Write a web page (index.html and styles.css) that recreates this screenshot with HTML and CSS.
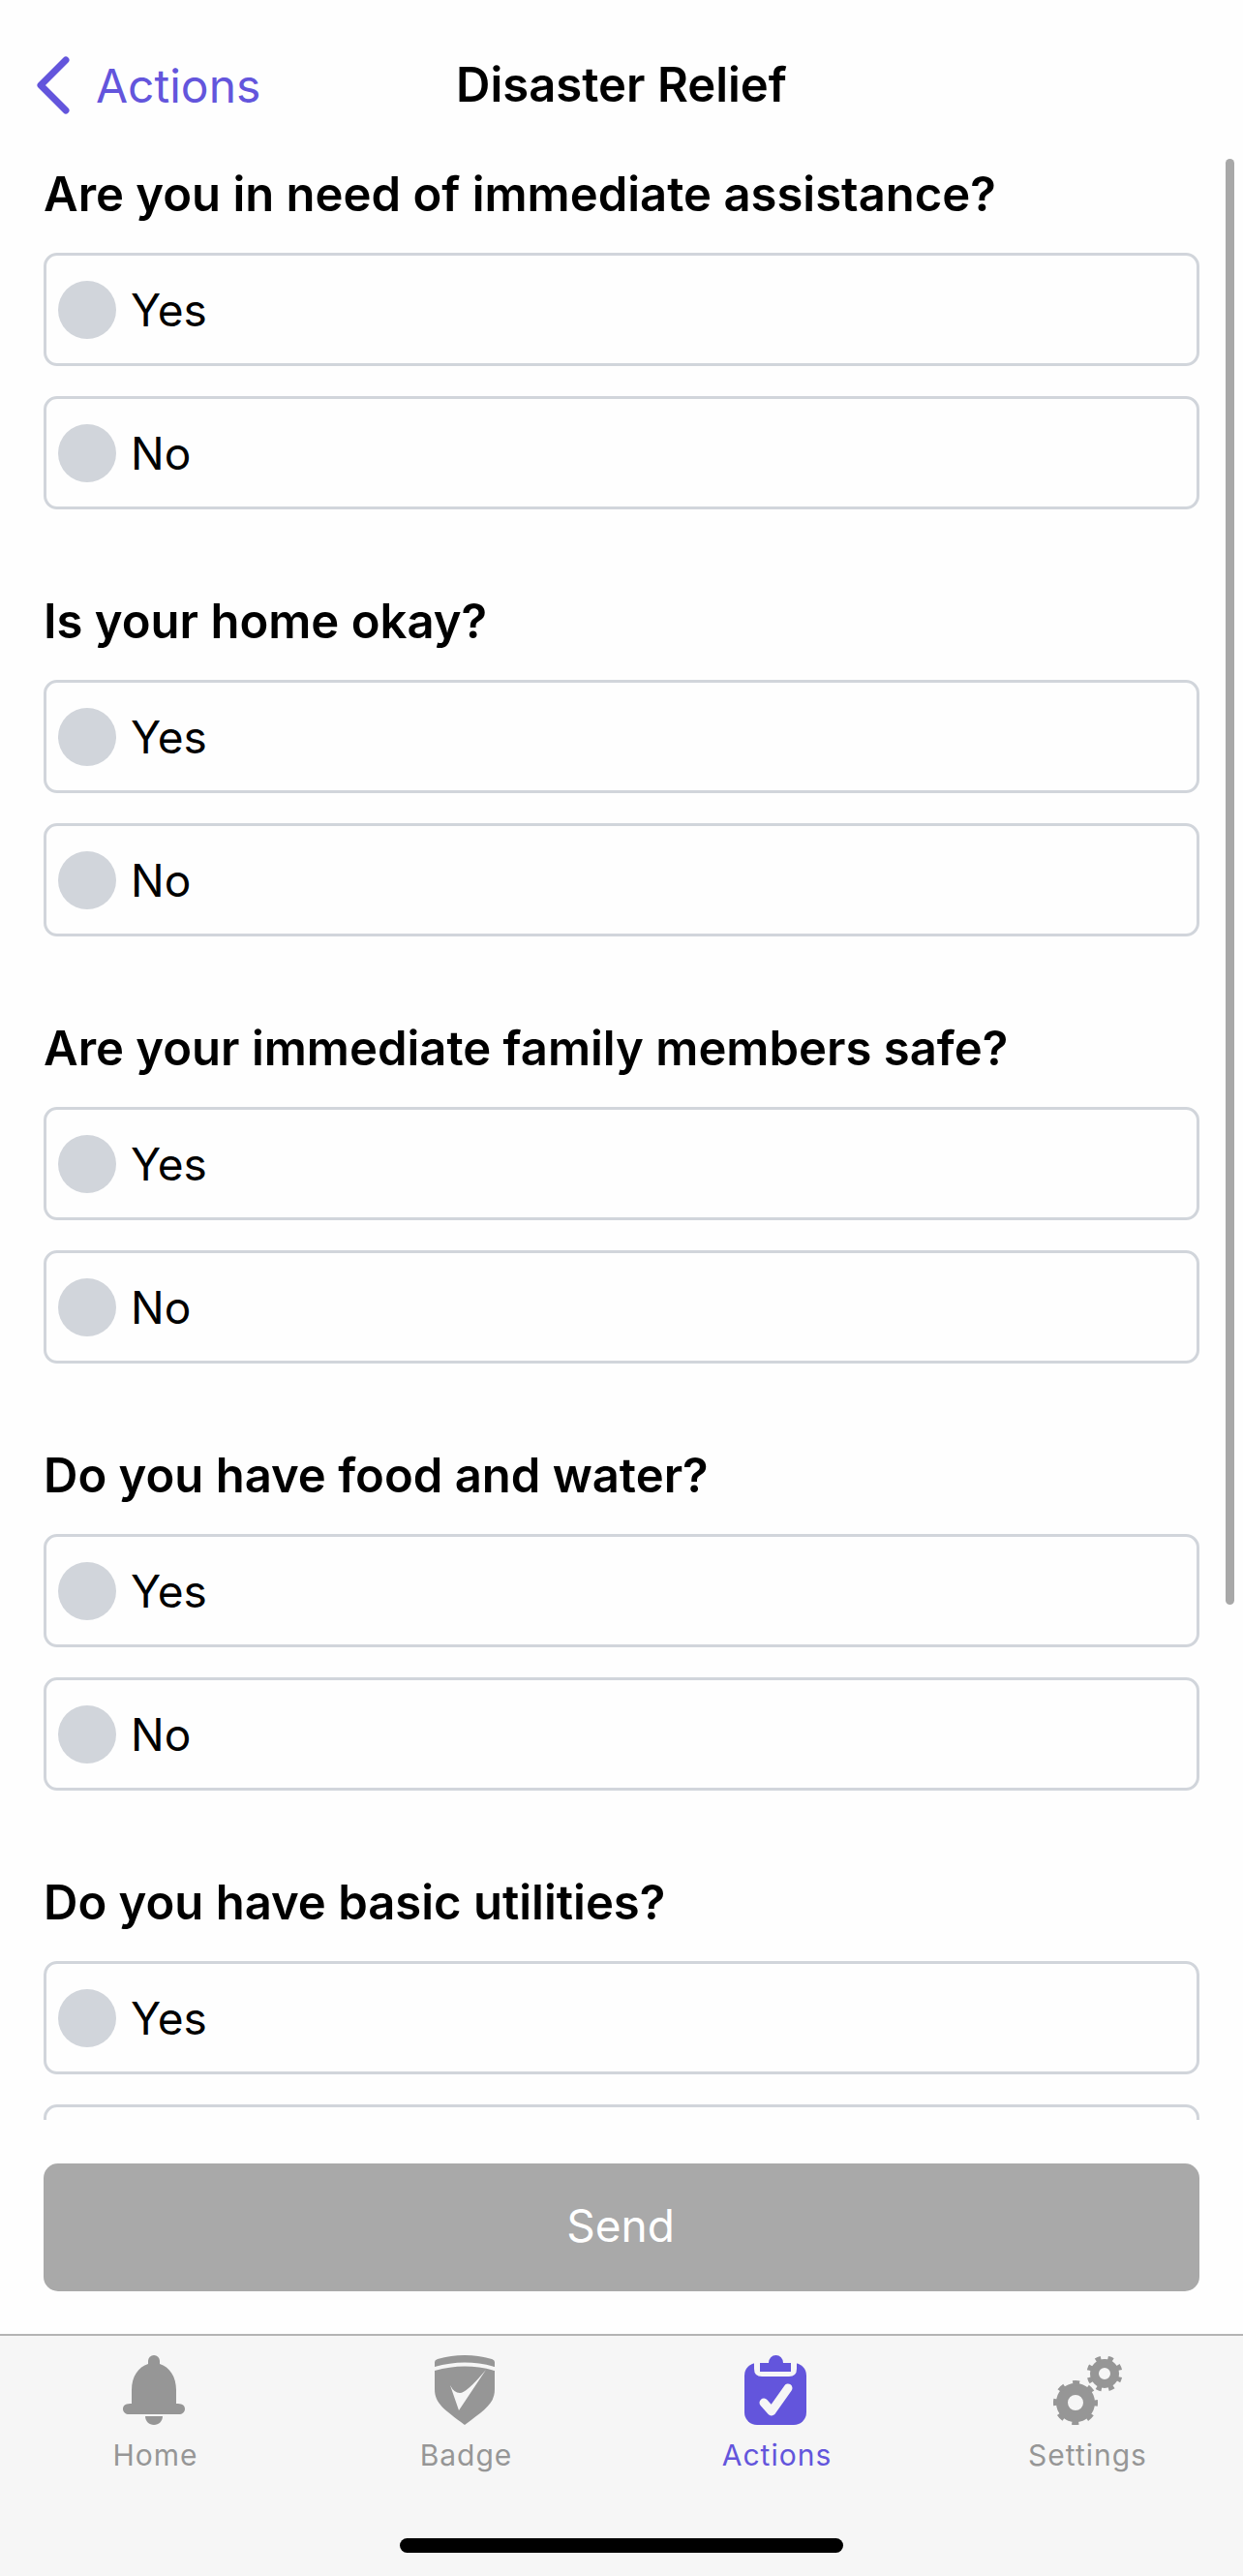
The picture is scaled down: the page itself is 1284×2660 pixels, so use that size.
FILE: index.html
```html
<!DOCTYPE html>
<html>
<head>
    <title>Disaster Relief</title>
    <link rel="stylesheet" href="styles.css">
</head>
<body>

    <!-- Nav header -->
    <div class="header">
        <div class="back">
            <svg class="chevron" width="36" height="60" viewBox="0 0 36 60"><path d="M32 4 L6 30 L32 56" /></svg>
            <span>Actions</span>
        </div>
        <div class="title">Disaster Relief</div>
        <div></div>
    </div>

    <!-- Questions -->
    <div class="scroll">
        <div class="scrollbar"></div>

        <div class="question">
            <h2>Are you in need of immediate assistance?</h2>
            <div class="option"><span class="radio"></span>Yes</div>
            <div class="option"><span class="radio"></span>No</div>
        </div>

        <div class="question">
            <h2>Is your home okay?</h2>
            <div class="option"><span class="radio"></span>Yes</div>
            <div class="option"><span class="radio"></span>No</div>
        </div>

        <div class="question">
            <h2>Are your immediate family members safe?</h2>
            <div class="option"><span class="radio"></span>Yes</div>
            <div class="option"><span class="radio"></span>No</div>
        </div>

        <div class="question">
            <h2>Do you have food and water?</h2>
            <div class="option"><span class="radio"></span>Yes</div>
            <div class="option"><span class="radio"></span>No</div>
        </div>

        <div class="question">
            <h2>Do you have basic utilities?</h2>
            <div class="option"><span class="radio"></span>Yes</div>
            <!-- only the top edge of this one is in view -->
            <div class="option"></div>
        </div>
    </div>

    <button class="send">Send</button>

    <!-- Tab bar -->
    <div class="tabbar">
        <div class="tabs">
            <div class="tab">
                <svg class="nudge" width="64" height="72" viewBox="0 0 64 72">
                    <path fill="#969696" d="M26 9 V6 a6 6 0 0 1 12 0 V9 C48 12 55 22 55 36 V50 C60 50 64 51 64 55.500 C64 59 61 61 58 61 H6 C3 61 0 59 0 55.500 C0 51 4 50 9 50 V36 C9 22 16 12 26 9 Z" />
                    <path fill="#969696" d="M23 63 H41 C41 68 37 72 32 72 C27 72 23 68 23 63 Z" />
                </svg>
                <span>Home</span>
            </div>
            <div class="tab">
                <svg class="nudge" width="62" height="72" viewBox="0 0 62 72">
                    <path fill="#969696" d="M0 7 Q0 5 3 4 Q31 -4 59 4 Q62 5 62 7 V12 Q31 3 0 12 Z" />
                    <path fill="#969696" d="M0 16 Q31 7 62 16 V35 C62 50 52 56 31 72 C10 56 0 50 0 35 Z" />
                    <path fill="#f6f6f6" d="M53 15 L25 57 L16 31 Q20 39 26 39 Q33 39 53 15 Z" />
                </svg>
                <span>Badge</span>
            </div>
            <div class="tab active">
                <svg class="nudge" width="64" height="72" viewBox="0 0 64 72">
                    <rect y="8" width="64" height="64" rx="13" fill="#6355dc" />
                    <path fill="none" stroke="#f6f6f6" stroke-width="6" d="M13 6 V14 Q13 19 18 19 H46 Q51 19 51 14 V6" />
                    <rect x="10" y="0" width="44" height="8" fill="#f6f6f6" />
                    <path fill="#6355dc" d="M16 17 V9 H25 V8 a7.500 8 0 0 1 15 0 V9 H48 V17 Z" />
                    <path fill="none" stroke="#f6f6f6" stroke-width="9" stroke-linecap="round" stroke-linejoin="round" d="M20 49 L28 58 L45 34" />
                </svg>
                <span>Actions</span>
            </div>
            <div class="tab">
                <svg width="72" height="72" viewBox="0 0 72 72">
                    <g fill="none" stroke="#969696">
                        <circle cx="23" cy="49" r="14" stroke-width="12" />
                        <circle cx="23" cy="49" r="20.500" stroke-width="5" stroke-dasharray="7 9.100" stroke-dashoffset="3.500" />
                        <circle cx="53" cy="19" r="10.500" stroke-width="9" />
                        <circle cx="53" cy="19" r="16" stroke-width="5" stroke-dasharray="5.500 7.070" stroke-dashoffset="2.750" transform="rotate(20 53 19)" />
                    </g>
                </svg>
                <span>Settings</span>
            </div>
        </div>
        <div class="home-indicator"></div>
    </div>

</body>
</html>
```

FILE: styles.css
```css
body { margin: 0; width: 1284px; height: 2660px; display: flex; flex-direction: column; background: #fefefe; color: #000; font-family: Inter, "Liberation Sans", sans-serif; overflow: hidden; }

.header { height: 164px; flex: none; box-sizing: border-box; padding-top: 58px; display: grid; grid-template-columns: 1fr auto 1fr; align-items: start; }
.back { display: flex; align-items: center; height: 60px; padding-left: 36px; gap: 27px; color: #6355dc; font-size: 48px; }
.chevron { flex: none; }
.chevron path { fill: none; stroke: #6355dc; stroke-width: 7; stroke-linecap: round; stroke-linejoin: round; }
.title { height: 60px; line-height: 60px; font-size: 49px; font-weight: 600; }

.scroll { position: relative; height: 2025px; flex: none; overflow: hidden; box-sizing: border-box; padding: 6px 45px 0; }
.scrollbar { position: absolute; top: 0; left: 1266px; width: 9px; height: 1493px; border-radius: 5px; background: #a8a8a8; }

.question { margin-bottom: 85px; }
.question h2 { margin: 0 0 31px; height: 60px; line-height: 62px; font-size: 49px; font-weight: 600; }

.option { display: flex; align-items: center; gap: 15px; height: 117px; box-sizing: border-box; margin-bottom: 31px; padding-left: 12px; border: 3px solid #d1d5db; border-radius: 14px; font-size: 46px; }
.question .option:last-child { margin-bottom: 0; }
.radio { width: 60px; height: 60px; flex: none; border-radius: 50%; background: #d1d5db; }

.send { display: block; flex: none; width: 1194px; height: 132px; margin: 45px 0 44px 45px; padding: 0 2px 4px 0; border: none; border-radius: 15px; background: #a9a9a9; color: #fff; font-family: inherit; font-size: 46px; }

.tabbar { flex: 1; border-top: 2px solid #b4b4b4; background: #f6f6f6; }
.tabs { display: grid; grid-template-columns: repeat(4, 321px); padding-top: 20px; }
.tab { display: flex; flex-direction: column; align-items: center; gap: 13px; color: #969696; font-size: 30px; line-height: 36px; letter-spacing: 1px; }
.tab svg { display: block; }
.tab .nudge { margin-right: 4px; }
.tab.active { color: #6355dc; }
.home-indicator { width: 458px; height: 15px; margin: 68px auto 0; border-radius: 8px; background: #000; }
```
